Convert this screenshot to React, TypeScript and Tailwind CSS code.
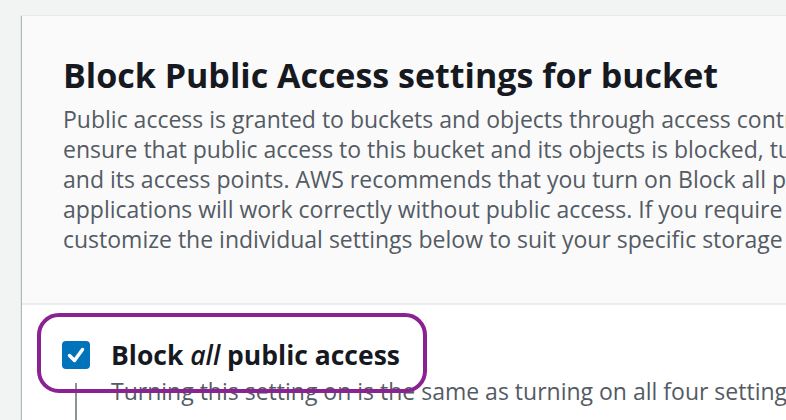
const paragraph = [
  "Public access is granted to buckets and objects through access control lists (ACLs), bucket policies, access point policies, or all. In order to",
  "ensure that public access to this bucket and its objects is blocked, turn on Block all public access. These settings apply only to this bucket",
  "and its access points. AWS recommends that you turn on Block all public access, but before applying any of these settings, ensure that your",
  "applications will work correctly without public access. If you require some level of public access to this bucket or objects within, you can",
  "customize the individual settings below to suit your specific storage use cases.",
];

export default function App() {
  return (
    <div className="h-[420px] w-[786px] overflow-hidden bg-[#f2f3f3] pl-[22px] pt-4 font-['Open_Sans',sans-serif]">
      {/* Panel */}
      <div className="w-[1100px] bg-white shadow-[-1px_0_1px_rgba(0,28,36,0.25),0_1px_1px_rgba(0,28,36,0.2)]">
        {/* Header */}
        <div className="border-b-2 border-[#eaeded] bg-[#fafafa] pb-[49px] pl-[41px] pt-[37px]">
          <h2 className="text-[34px] font-bold leading-[44px] text-[#16191f]">
            Block Public Access settings for bucket
          </h2>
          <div className="mt-[7px] text-[23px] leading-[30px] text-[#545b64]">
            {paragraph.map((line) => (
              <p key={line} className="whitespace-nowrap">
                {line}
              </p>
            ))}
          </div>
        </div>

        {/* Body */}
        <div className="relative flex pl-10 pt-[36px]">
          <div className="flex w-7 flex-col items-center">
            <div className="flex h-7 w-7 items-center justify-center rounded-[4px] bg-[#0073bb]">
              <svg viewBox="0 0 28 28" className="h-7 w-7" fill="none">
                <path
                  d="M7.5 14.5l5 5 8-11"
                  stroke="white"
                  strokeWidth="3.5"
                  strokeLinecap="round"
                  strokeLinejoin="round"
                />
              </svg>
            </div>
            <div className="mt-[14px] h-[60px] w-[2px] bg-[#879596]" />
          </div>
          <div className="ml-[21px]">
            <div className="text-[26.5px] font-bold leading-7 text-[#16191f]">
              Block <i className="font-semibold">all</i> public access
            </div>
            <p className="mt-[7px] whitespace-nowrap text-[23px] leading-[30px] text-[#545b64]">
              Turning this setting on is the same as turning on all four settings below. Each of the following settings are independent of one another.
            </p>
          </div>

          {/* Highlight */}
          <div className="pointer-events-none absolute left-[15px] top-[8px] h-[80px] w-[390px] rounded-[22px] border-[4.5px] border-[#8b2291]" />
        </div>
      </div>
    </div>
  );
}
